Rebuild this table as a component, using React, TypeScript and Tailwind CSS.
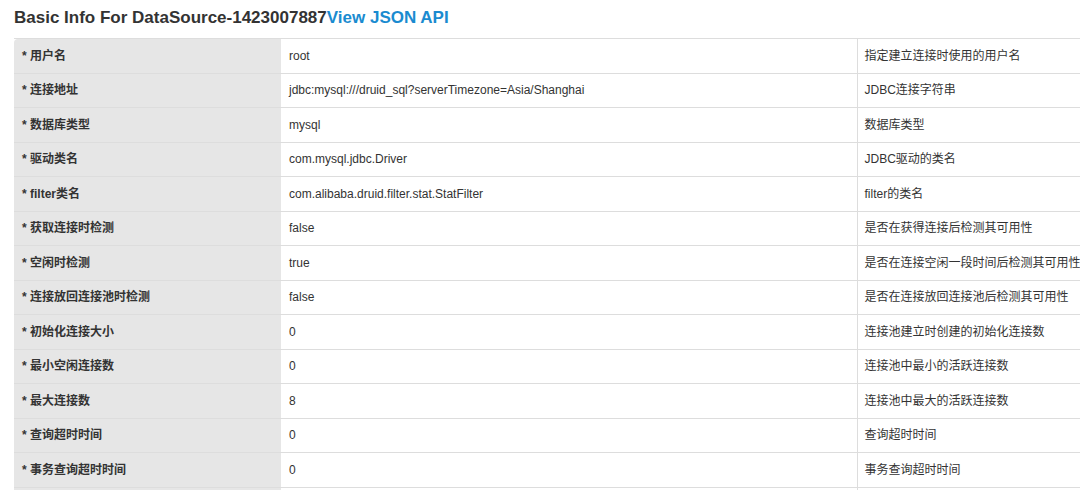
const rows: [string, string, string][] = [
  ["用户名", "root", "指定建立连接时使用的用户名"],
  ["连接地址", "jdbc:mysql:///druid_sql?serverTimezone=Asia/Shanghai", "JDBC连接字符串"],
  ["数据库类型", "mysql", "数据库类型"],
  ["驱动类名", "com.mysql.jdbc.Driver", "JDBC驱动的类名"],
  ["filter类名", "com.alibaba.druid.filter.stat.StatFilter", "filter的类名"],
  ["获取连接时检测", "false", "是否在获得连接后检测其可用性"],
  ["空闲时检测", "true", "是否在连接空闲一段时间后检测其可用性"],
  ["连接放回连接池时检测", "false", "是否在连接放回连接池后检测其可用性"],
  ["初始化连接大小", "0", "连接池建立时创建的初始化连接数"],
  ["最小空闲连接数", "0", "连接池中最小的活跃连接数"],
  ["最大连接数", "8", "连接池中最大的活跃连接数"],
  ["查询超时时间", "0", "查询超时时间"],
  ["事务查询超时时间", "0", "事务查询超时时间"],
];

export default function App() {
  return (
    <div
      className="h-[490px] w-[1080px] overflow-hidden bg-white text-[#333]"
      style={{ fontFamily: '"Liberation Sans", "Noto Sans CJK SC", sans-serif' }}
    >
      <h3 className="pl-[14px] pt-[7px] text-[17px] font-bold leading-[22px] text-[#333]">
        Basic Info For DataSource-1423007887
        <a className="text-[#1a8bd0]">View JSON API</a>
      </h3>
      <table className="mt-[9px] ml-[14px] w-[1200px] table-fixed border-collapse text-[12px]">
        <colgroup>
          <col className="w-[267px]" />
          <col className="w-[576px]" />
          <col />
        </colgroup>
        <tbody>
          {rows.map(([label, value, desc], i) => (
            <tr key={label} className="h-[34.5px] border-t border-[#dddddd]">
              <td
                className={`bg-[#e6e6e6] pl-2 font-bold text-[#333] ${
                  i === 0 ? "rounded-tl-[4px]" : ""
                }`}
              >
                * {label}
              </td>
              <td className="bg-white pl-2 text-[#333]">{value}</td>
              <td className="border-l border-[#dddddd] bg-white pl-[7px] text-[#333]">
                {desc}
              </td>
            </tr>
          ))}
          {/* next row, only its top edge shows in the viewport */}
          <tr className="h-[34.5px] border-t border-[#dddddd]">
            <td className="bg-[#e6e6e6]" />
            <td className="bg-white" />
            <td className="border-l border-[#dddddd] bg-white" />
          </tr>
        </tbody>
      </table>
    </div>
  );
}
